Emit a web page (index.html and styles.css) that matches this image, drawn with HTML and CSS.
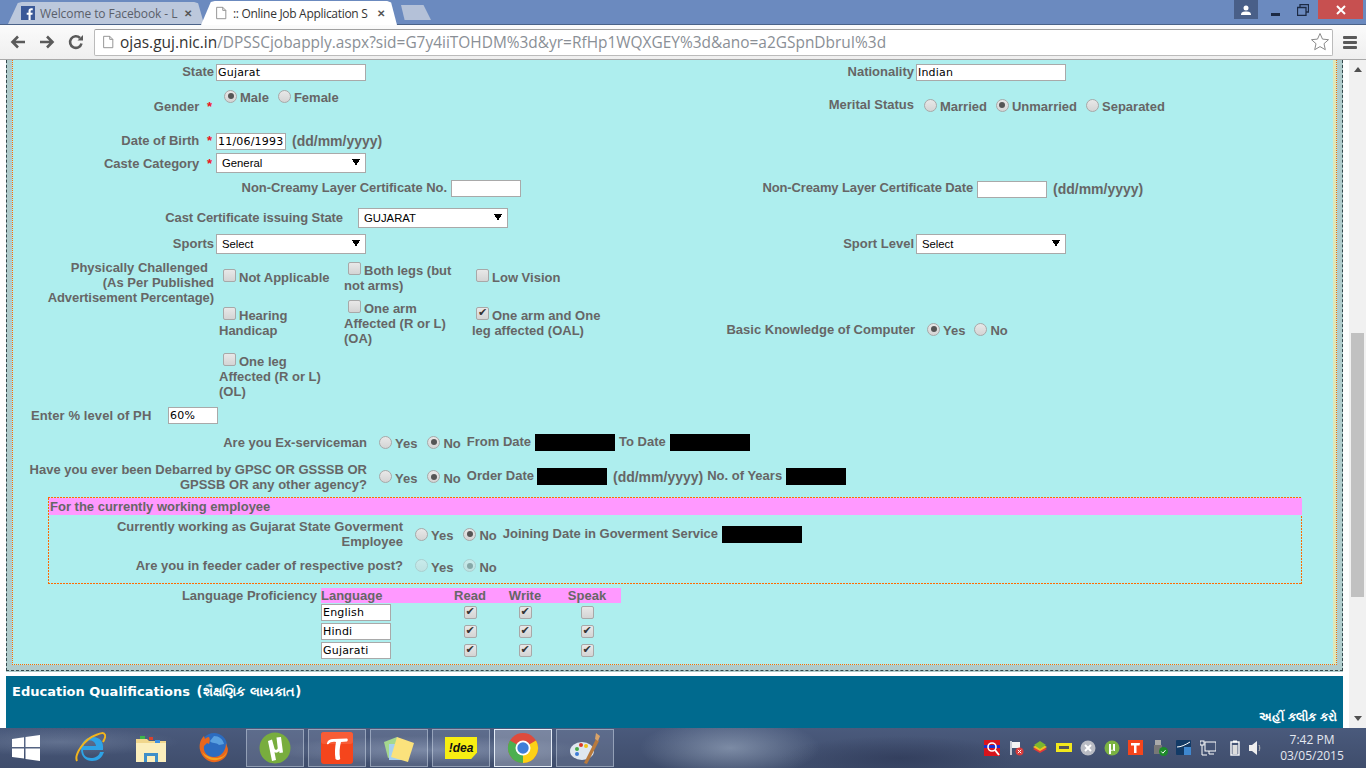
FILE: index.html
```html
<!DOCTYPE html>
<html lang="en">
<head>
<meta charset="utf-8">
<title>:: Online Job Application System</title>
<link rel="stylesheet" href="styles.css">
</head>
<body>
<header class="tabstrip">
  <div class="tab tab-back">
    <svg class="favicon" viewBox="0 0 16 16"><rect width="16" height="16" fill="#3b5998"/><path d="M11 16V10h2l.4-2.400H11V6c0-.8.3-1.200 1.200-1.200h1.200V2.600C13 2.500 12.300 2.500 11.600 2.500 9.800 2.500 8.600 3.600 8.600 5.600v2H6.500V10h2.100v6z" fill="#fff"/></svg>
    <span class="tab-title">Welcome to Facebook - L</span>
    <span class="tab-x">✕</span>
  </div>
  <div class="tab tab-front">
    <svg class="favicon" viewBox="0 0 16 16"><path d="M3 1.500h7l3.500 3.500v9.500H3z M10 1.500V5h3.500" fill="#fff" stroke="#888" stroke-width="1"/></svg>
    <span class="tab-title">:: Online Job Application S</span>
    <span class="tab-x">✕</span>
  </div>
  <div class="tab-new"></div>
  <div class="win-controls">
    <div class="win-user"><svg viewBox="0 0 12 10" width="12" height="10"><circle cx="6" cy="3" r="2.500" fill="#fff"/><path d="M1 10c0-3 2-3.500 5-3.500s5 .5 5 3.500z" fill="#fff"/></svg></div>
    <div class="win-btn"><svg viewBox="0 0 12 12" width="12" height="12"><rect x="2" y="9" width="9" height="3" fill="#1c2a44"/></svg></div>
    <div class="win-btn"><svg viewBox="0 0 12 12" width="12" height="12"><path d="M3 3V.5h8.500V8H9M.5 3.500h8.500V11.500H.5z" fill="none" stroke="#1c2a44" stroke-width="1.300"/></svg></div>
    <div class="win-close"><svg viewBox="0 0 10 10" width="10" height="10"><path d="M1 1l8 8M9 1l-8 8" stroke="#fff" stroke-width="2"/></svg></div>
  </div>
</header>
<nav class="toolbar">
  <svg class="nav-ico" viewBox="0 0 16 16"><path d="M15 8H3M8 2.500L2.500 8 8 13.500" fill="none" stroke="#5a5a5a" stroke-width="2.600"/></svg>
  <svg class="nav-ico" viewBox="0 0 16 16"><path d="M1 8h12M8 2.500L13.500 8 8 13.500" fill="none" stroke="#5a5a5a" stroke-width="2.600"/></svg>
  <svg class="nav-ico" viewBox="0 0 16 16"><path d="M13.500 9.500A5.800 5.800 0 1 1 12 4" fill="none" stroke="#5a5a5a" stroke-width="2.600"/><path d="M9.500 6.500H15V1z" fill="#5a5a5a"/></svg>
  <div class="omnibox">
    <svg class="favicon" viewBox="0 0 16 16"><path d="M3 1.500h7l3.500 3.500v9.500H3z M10 1.500V5h3.500" fill="#fff" stroke="#888" stroke-width="1"/></svg>
    <span class="url"><span class="url-host">ojas.guj.nic.in</span>/DPSSCjobapply.aspx?sid=G7y4iiTOHDM%3d&amp;yr=RfHp1WQXGEY%3d&amp;ano=a2GSpnDbruI%3d</span>
    <svg class="star" viewBox="0 0 20 20"><path d="M10 1.500l2.500 5.600 6 .6-4.500 4 1.300 6L10 14.600 4.700 17.700l1.300-6-4.500-4 6-.6z" fill="#fff" stroke="#8a8a8a" stroke-width="1"/></svg>
  </div>
  <div class="menu-ico"><span></span><span></span><span></span></div>
</nav>
<div class="viewport">
  <main class="page">
    <section class="outer">
      <form class="inner">
        <div class="row r-state">
          <label class="lab lab-a lift">State</label>
          <input class="txt w150" type="text" value="Gujarat">
          <label class="lab lab-b lift">Nationality</label>
          <input class="txt w150" type="text" value="Indian">
        </div>
        <div class="row r-gender">
          <div class="lab lab-a gender-lab">Gender <span class="req">*</span></div>
          <div class="val-a gender-val">
            <input class="rad rad-first" type="radio" checked name="g"><span class="opt">Male</span>
            <input class="rad" type="radio" name="g"><span class="opt">Female</span>
          </div>
          <div class="lab lab-b merital-lab">Merital Status</div>
          <div class="merital-val">
            <input class="rad rad-first" type="radio" name="m"><span class="opt opt-low">Married</span>
            <input class="rad" type="radio" checked name="m"><span class="opt opt-low">Unmarried</span>
            <input class="rad" type="radio" name="m"><span class="opt opt-low">Separated</span>
          </div>
        </div>
        <div class="row r-dob">
          <div class="lab lab-a lift-s">Date of Birth <span class="req">*</span></div>
          <input class="txt w70" type="text" value="11/06/1993">
          <span class="hint">(dd/mm/yyyy)</span>
        </div>
        <div class="row r-caste">
          <div class="lab lab-a">Caste Category <span class="req">*</span></div>
          <select class="sel w150"><option>General</option></select>
        </div>
        <div class="row r-creamy">
          <label class="lab lab-c lift">Non-Creamy Layer Certificate No.</label>
          <input class="txt w70 creamy-no" type="text">
          <label class="lab lab-d lift">Non-Creamy Layer Certificate Date</label>
          <input class="txt w70 creamy-date" type="text">
          <span class="hint">(dd/mm/yyyy)</span>
        </div>
        <div class="row r-cert">
          <label class="lab lab-e lift-s">Cast Certificate issuing State</label>
          <select class="sel w150"><option>GUJARAT</option></select>
        </div>
        <div class="row r-sports">
          <label class="lab lab-a lift-s">Sports</label>
          <select class="sel w150"><option>Select</option></select>
          <label class="lab lab-b lift-s">Sport Level</label>
          <select class="sel w150"><option>Select</option></select>
        </div>
        <div class="row r-ph">
          <div class="lab lab-a ph-lab"><span class="ph-first">Physically Challenged</span><br>(As Per Published<br><span class="ph-tight">Advertisement Percentage)</span></div>
          <div class="ph-grid">
            <div class="ph-cell"><input class="chk" type="checkbox">Not Applicable</div>
            <div class="ph-cell"><input class="chk" type="checkbox">Both legs (but not arms)</div>
            <div class="ph-cell"><input class="chk" type="checkbox">Low Vision</div>
            <div class="ph-cell"><input class="chk" type="checkbox">Hearing Handicap</div>
            <div class="ph-cell"><input class="chk" type="checkbox">One arm Affected (R or L) (OA)</div>
            <div class="ph-cell"><input class="chk" type="checkbox" checked>One arm and One leg affected (OAL)</div>
            <div class="ph-cell"><input class="chk" type="checkbox">One leg Affected (R or L) (OL)</div>
          </div>
          <div class="basic">
            <div class="lab basic-lab">Basic Knowledge of Computer</div>
            <input class="rad rad-first" type="radio" checked name="b"><span class="opt opt-low">Yes</span>
            <input class="rad" type="radio" name="b"><span class="opt opt-low">No</span>
          </div>
        </div>
        <div class="row r-level">
          <label class="lab level-lab">Enter % level of PH</label>
          <input class="txt w50" type="text" value="60%">
        </div>
        <div class="row r-ex">
          <div class="lab lab-f">Are you Ex-serviceman</div>
          <input class="rad rad-first" type="radio" name="x"><span class="opt opt-low">Yes</span>
          <input class="rad rad-no" type="radio" checked name="x"><span class="opt opt-low">No</span>
          <span class="lab date-lab">From Date</span><span class="redact w80"></span>
          <span class="lab date-lab">To Date</span><span class="redact w80"></span>
        </div>
        <div class="row r-deb">
          <div class="lab lab-f">Have you ever been Debarred by GPSC OR GSSSB OR GPSSB OR any other agency?</div>
          <input class="rad rad-first" type="radio" name="d"><span class="opt opt-low">Yes</span>
          <input class="rad rad-no" type="radio" checked name="d"><span class="opt opt-low">No</span>
          <span class="lab date-lab order-lab">Order Date</span><span class="redact w70b"></span>
          <span class="hint deb-hint">(dd/mm/yyyy)</span>
          <span class="lab date-lab">No. of Years</span><span class="redact w60b"></span>
        </div>
        <section class="working">
          <h3 class="working-head">For the currently working employee</h3>
          <div class="row r-cur">
            <div class="lab lab-g lab-wrap">Currently working as Gujarat State Goverment Employee</div>
            <input class="rad rad-first" type="radio" name="c"><span class="opt opt-low">Yes</span>
            <input class="rad rad-no" type="radio" checked name="c"><span class="opt opt-low">No</span>
            <span class="lab date-lab">Joining Date in Goverment Service</span><span class="redact w80"></span>
          </div>
          <div class="row r-feeder">
            <div class="lab lab-g">Are you in feeder cader of respective post?</div>
            <input class="rad rad-first off" type="radio" disabled name="f"><span class="opt opt-low">Yes</span>
            <input class="rad rad-no off" type="radio" checked disabled name="f"><span class="opt opt-low">No</span>
          </div>
        </section>
        <div class="row r-lang">
          <div class="lab lab-h">Language Proficiency</div>
          <div class="lang">
            <div class="lang-head"><span class="lc-name">Language</span><span class="lc lc-r">Read</span><span class="lc lc-w">Write</span><span class="lc lc-s">Speak</span></div>
            <div class="lang-row"><span class="lc-name"><input class="txt w70" type="text" value="English"></span><span class="lc lc-r"><input class="chk tight" type="checkbox" checked></span><span class="lc lc-w"><input class="chk tight" type="checkbox" checked></span><span class="lc lc-s"><input class="chk tight" type="checkbox"></span></div>
            <div class="lang-row"><span class="lc-name"><input class="txt w70" type="text" value="Hindi"></span><span class="lc lc-r"><input class="chk tight" type="checkbox" checked></span><span class="lc lc-w"><input class="chk tight" type="checkbox" checked></span><span class="lc lc-s"><input class="chk tight" type="checkbox" checked></span></div>
            <div class="lang-row"><span class="lc-name"><input class="txt w70" type="text" value="Gujarati"></span><span class="lc lc-r"><input class="chk tight" type="checkbox" checked></span><span class="lc lc-w"><input class="chk tight" type="checkbox" checked></span><span class="lc lc-s"><input class="chk tight" type="checkbox" checked></span></div>
          </div>
        </div>
      </form>
    </section>
    <section class="edu">
      <h2 class="edu-title">Education Qualifications <span class="edu-gu">(શૈક્ષણિક લાયકાત)</span></h2>
      <div class="edu-click">અહીં ક્લીક કરો</div>
    </section>
  </main>
  <aside class="scrollbar">
    <div class="sb-up"></div>
    <div class="sb-track"><div class="sb-thumb"></div></div>
    <div class="sb-down"></div>
  </aside>
</div>
<footer class="taskbar">
  <svg class="start" viewBox="0 0 28 26"><path d="M0 4l12-1.800V12H0zM13.500 2L28 0v12H13.500zM0 13.500h12v10L0 22zM13.500 13.500H28V26l-14.500-2z" fill="#fff"/></svg>
  <div class="pin pin-ie"><svg viewBox="0 0 32 34" width="32" height="34"><path d="M26 21c-1 4-5 6-9 6-5 0-8-3-8-8h20c1-8-3-13-10-13-7 0-12 5-12 12 0 8 5 12 11 12 6 0 10-3 12-9zM9.500 15c.5-3 3-5.500 6.500-5.500 3.500 0 5.800 2.500 6 5.500z" fill="#2ea3e6" fill-rule="evenodd"/><path d="M3 30C0 24 10 8 22 4c5-2 8-3 9 0 1 2-1 5-2 7" fill="none" stroke="#f3b51c" stroke-width="2"/></svg></div>
  <div class="pin pin-ex"><svg viewBox="0 0 32 34" width="32" height="34"><path d="M1 8h11l2 2h17v21H1z" fill="#f0d68c"/><path d="M1 12h30v19H1z" fill="#fbeebc"/><rect x="5" y="5" width="5" height="3" fill="#3bb54a"/><rect x="14" y="6" width="4" height="3" fill="#d8432f"/><rect x="20" y="9" width="5" height="3" fill="#3d8fe0"/><path d="M9 22h14v9h-3v-6h-8v6H9z" fill="#3f8fc9"/></svg></div>
  <div class="pin pin-ff"><svg viewBox="0 0 32 34" width="32" height="34"><circle cx="17" cy="15" r="13" fill="#2c6cc0"/><path d="M17 5c5 0 9 3 10 8l-5 1c-3-3-7-1-9-4z" fill="#5aa0e0"/><path d="M7 5C3 9 2 14 3 19c2 8 9 13 16 12 7-1 12-6 12-13l-2-6c0 8-5 14-12 14C10 26 6 21 7 15l3-3 2 1c1-3 1-5 0-7-2 0-3 1-4 2z" fill="#e8661c"/><path d="M5 21c3 6 9 9 15 8 5-1 9-4 10-9-2 5-6 7-11 7-5 0-10-2-14-6z" fill="#f4a11f"/></svg></div>
  <div class="tb-btn"><svg viewBox="0 0 32 32" width="32" height="32"><circle cx="16" cy="16" r="15.500" fill="#78ad3e"/><path d="M9 9l4-1.500 2.500 9c.6 2 3.300 1.500 3.200-.8L17.500 5.500 22 5l2 15.500-3.500.6-.3-2c-1.300 1.600-2.900 2-4.700 1.200L17 28l-4 1z" fill="#fff"/></svg></div>
  <div class="tb-btn"><svg viewBox="0 0 32 32" width="32" height="32"><rect width="32" height="32" rx="3" fill="#f5451c"/><rect width="32" height="12" rx="3" fill="#f75c36" /><path d="M6 11c1-3 3-4 6-4l14-.5c1 0 1 2.500 0 3l-6 .5c-1.500 5-1.800 11-.8 17-1 1.200-3.500 1.200-4.700 0-1-6-.5-12 .5-17-3-.5-6 0-7.500 2-1 .8-2-.2-1.500-1z" fill="#fff"/></svg></div>
  <div class="tb-btn"><svg viewBox="0 0 32 32" width="32" height="32"><path d="M1 10L14 5l5 16-14 5z" fill="#a5d88e"/><rect x="6" y="12" width="17" height="16" fill="#a6d0ef"/><path d="M14 5l17 6-6 19-17-5z" fill="#fbe27c"/></svg></div>
  <div class="tb-btn"><div class="idea">!dea</div></div>
  <div class="tb-btn tb-active"><svg viewBox="0 0 32 32" width="32" height="32"><circle cx="16" cy="16" r="15" fill="#de4b3c"/><path d="M16 16L29 8.500A15 15 0 0 1 16 31z" fill="#fcd116"/><path d="M16 16L16 31A15 15 0 0 1 3 8.500z" fill="#4caf50"/><circle cx="16" cy="16" r="7.500" fill="#fff"/><circle cx="16" cy="16" r="5.700" fill="#3f7ed8"/></svg></div>
  <div class="tb-btn"><svg viewBox="0 0 32 32" width="32" height="32"><ellipse cx="13" cy="19" rx="12" ry="9" fill="#dfe7ef"/><circle cx="8" cy="17" r="2" fill="#48a94a"/><circle cx="12" cy="13" r="2" fill="#d83a2b"/><circle cx="17" cy="14" r="2" fill="#f0c417"/><circle cx="8" cy="22" r="2" fill="#3d7bd6"/><path d="M15 31l12-24 3 2-12 23z" fill="#b87a3d"/><path d="M26 7l1-6 4 3-2 5z" fill="#d9a369"/></svg></div>
  <div class="tray">
    <svg class="tray-ico" viewBox="0 0 16 16"><rect width="16" height="16" fill="#d8141c"/><rect y="5" width="16" height="3" fill="#1c2fd0"/><circle cx="8" cy="7" r="4" fill="none" stroke="#fff" stroke-width="1.600"/><path d="M11 10l4 5" stroke="#fff" stroke-width="2"/></svg>
    <svg class="tray-ico" viewBox="0 0 16 16"><path d="M3 1v14" stroke="#fff" stroke-width="1.400"/><path d="M4 2h8v6H4z" fill="#f4f4f4"/><circle cx="11.500" cy="11.500" r="4" fill="#d83a3a"/><path d="M9.800 9.800l3.400 3.400M13.200 9.800l-3.400 3.400" stroke="#fff"/></svg>
    <svg class="tray-ico" viewBox="0 0 16 16"><path d="M1 9l7-4 7 4-7 4z" fill="#e23a3a"/><path d="M1 7l7-4 7 4-7 4z" fill="#f0c020"/><path d="M2 5l6-4 6 4-6 4z" fill="#7cb82f"/></svg>
    <svg class="tray-ico" viewBox="0 0 16 16"><rect y="3" width="16" height="9" fill="#f2e81c"/><rect x="3" y="6" width="10" height="3" fill="#555"/></svg>
    <svg class="tray-ico" viewBox="0 0 16 16"><circle cx="8" cy="8" r="7.500" fill="#b9bcc4"/><path d="M5 5l6 6M11 5l-6 6" stroke="#fff" stroke-width="2"/></svg>
    <svg class="tray-ico" viewBox="0 0 16 16"><circle cx="8" cy="8" r="7.500" fill="#7bb342"/><path d="M5 4h2v5c0 1.500 2 1.500 2 0V4h2v7H9.500v-1c-.8.800-1.700 1-2.500.5V14H5z" fill="#fff"/></svg>
    <svg class="tray-ico" viewBox="0 0 16 16"><rect width="15" height="15" fill="#f5451c"/><path d="M3 3h9l-.5 2.500h-3V13h-2.500V5.500H3z" fill="#fff"/></svg>
    <svg class="tray-ico" viewBox="0 0 16 16"><rect x="3" y="0" width="6" height="5" fill="#aaa"/><rect x="2" y="5" width="8" height="9" fill="#777"/><circle cx="11.500" cy="11.500" r="4.500" fill="#1d8a2a"/><path d="M9.300 11.500l1.600 1.700 2.600-3" stroke="#fff" fill="none"/></svg>
    <svg class="tray-ico" viewBox="0 0 16 16"><rect width="15" height="15" rx="1" fill="#123a66"/><rect x="8" y="7" width="7" height="8" fill="#3f88d0"/><path d="M1 7c4 0 8-2 13-5" stroke="#fff" fill="none"/></svg>
    <svg class="tray-ico" viewBox="0 0 16 16"><rect x="5" y="2" width="11" height="9" fill="none" stroke="#fff"/><rect x="0" y="1" width="4" height="4" fill="none" stroke="#fff"/><path d="M2 5v10M9 11v3h5M2 15h5" stroke="#fff" fill="none"/></svg>
    <svg class="tray-ico tray-batt" viewBox="0 0 16 16"><rect x="4" y="2" width="8" height="13" fill="none" stroke="#fff" stroke-width="1.400"/><rect x="6" y="0.500" width="4" height="2" fill="#fff"/><rect x="5.500" y="5" width="5" height="9" fill="#ddd"/></svg>
    <svg class="tray-ico" viewBox="0 0 16 16"><path d="M1 5h3l5-4v14l-5-4H1z" fill="#eee"/><path d="M11 5c1 2 1 4 0 6" stroke="#bbb" fill="none"/></svg>
    <div class="clock"><span>7:42 PM</span><span>03/05/2015</span></div>
  </div>
</footer>
</body>
</html>
```

FILE: styles.css
```css
* { box-sizing: border-box; }
html, body { margin: 0; padding: 0; }
body {
  width: 1366px; height: 768px; overflow: hidden;
  display: flex; flex-direction: column;
  background: #fff;
  font-family: "Liberation Sans", Arial, sans-serif;
}

/* Browser chrome */
.tabstrip {
  height: 25px; flex: none; display: flex; align-items: flex-end;
  background: #6b8abf; border-bottom: 1px solid #4a6288;
  padding-left: 8px; position: relative;
  font-family: "Open Sans", sans-serif; font-size: 12px;
}
.tab {
  width: 196px; height: 22px; display: flex; align-items: center;
  padding: 0 12px 0 13px; gap: 5px; flex: none;
  clip-path: polygon(0 100%, 5% 4%, 7% 0, 95% 0, 97% 6%, 100% 100%);
}
.tab-back { background: #bcc8dc; color: #5a5f6a; letter-spacing: -.08px; }
.tab-front { background: #fff; color: #333; margin-left: -3px; height: 24px; margin-bottom: -1px; letter-spacing: -.3px; }
.favicon { width: 14px; height: 14px; flex: none; }
.tab-title { flex: 1; white-space: nowrap; min-width: 0; }
.tab-x { font-size: 10px; color: #555; font-weight: bold; flex: none; }
.tab-new {
  width: 30px; height: 15px; background: #b4c1d8; margin: 0 0 4px 4px; flex: none;
  clip-path: polygon(0 0, 75% 0, 100% 100%, 12% 100%);
}
.win-controls { margin-left: auto; align-self: flex-start; display: flex; height: 19px; }
.win-user {
  width: 24px; background: #495f88; display: flex; align-items: center; justify-content: center;
  margin-right: 3px;
}
.win-btn { width: 28px; display: flex; align-items: center; justify-content: center; }
.win-close {
  width: 45px; background: #c75050; display: flex; align-items: center; justify-content: center;
  margin: 0 3px 0 1px;
}
.toolbar {
  height: 35px; flex: none; display: flex; align-items: center;
  background: linear-gradient(#fbfbfb, #efefef); border-bottom: 1px solid #a9a9a9;
  padding: 0 0 0 10px;
}
.nav-ico { width: 16px; height: 16px; flex: none; margin-right: 13px; }
.omnibox {
  width: 1239px; height: 27px; margin-left: -3px;
  background: #fff; border: 1px solid #bbb; border-top-color: #a0a0a0; border-radius: 2px;
  display: flex; align-items: center; padding: 0 2px 0 6px; gap: 5px;
}
.url {
  flex: 1; font: 15.440px "Open Sans", sans-serif; color: #8a8f96; white-space: nowrap; overflow: hidden;
}
.url-host { color: #333; }
.star { width: 20px; height: 20px; flex: none; }
.menu-ico { width: 14px; margin-left: 10px; display: flex; flex-direction: column; gap: 2px; }
.menu-ico span { display: block; height: 3px; background: #5a5a5a; border-radius: 1px; }

/* Page */
.viewport { flex: 1; display: flex; min-height: 0; }
.page { width: 1349px; flex: none; overflow: hidden; }
.scrollbar { width: 17px; flex: none; background: #f1f1f1; display: flex; flex-direction: column; align-items: center; }
.sb-up, .sb-down { width: 0; height: 0; flex: none; border: 4px solid transparent; }
.sb-up { border-top: 0; border-bottom: 5px solid #505050; margin: 7px 0 5px; }
.sb-down { border-bottom: 0; border-top: 5px solid #505050; margin: 5px 0 7px; }
.sb-track { flex: 1; width: 100%; padding-top: 256px; padding-left: 2px; padding-right: 2px; }
.sb-thumb { height: 264px; background: #c1c1c1; }

.outer {
  margin-left: 6px; width: 1337px; height: 611px;
  background: #b0cccc;
  border-left: 1px dashed #33484c; border-right: 1px dashed #33484c; border-bottom: 1px dashed #33484c;
  padding: 0 5px 5px;
  box-shadow: 0 1px 0 #b0cccc;
}
.inner {
  height: 605px; display: block;
  background: #aeeeee;
  border: 1px dotted #ff6a00; border-top: 0;
  box-shadow: inset -3px 0 0 #dfe8b8;
  color: #666; font-size: 13px; font-weight: bold; line-height: 15px;
}
.row { display: flex; align-items: center; }
.lab { text-align: right; flex: none; }
.lift { margin-bottom: 3px; }
.lift-s { margin-bottom: 2px; }
.lab-a { width: 201px; margin-right: 2px; }
.lab-b { width: 198px; margin-right: 2px; margin-left: 0; }
.lab-c { width: 434px; margin-right: 4px; letter-spacing: -.06px; }
.lab-d { width: 452px; margin-right: 4px; letter-spacing: -.12px; }
.lab-e { width: 330px; margin-right: 15px; letter-spacing: -.07px; }
.lab-f { width: 354px; }
.lab-g { width: 354px; }
.lab-wrap { padding-left: 60px; }
.lab-h { width: 304px; margin-right: 4px; }
.req { color: #f01020; margin-left: 4px; margin-right: 2px; }

.txt {
  height: 17px; border: 1px solid #a9a9a9; background: #fff; padding: 0 0 0 1px; margin: 0;
  font: 11px "DejaVu Sans", sans-serif; letter-spacing: .2px; color: #000; flex: none; outline: 0; border-radius: 0;
}
.sel {
  height: 20px; border: 1px solid #a9a9a9; background-color: #fff; margin: 0; padding: 0 0 0 5px;
  font: 11.300px "Liberation Sans", Arial, sans-serif; color: #000; flex: none; appearance: none; border-radius: 0;
  background-image:
    linear-gradient(to top right, transparent 50%, #000 50%),
    linear-gradient(to top left, transparent 50%, #000 50%);
  background-size: 4px 7px, 4px 7px;
  background-position: right 9px top 5px, right 5px top 5px;
  background-repeat: no-repeat;
}
.w150 { width: 150px; }
.w70 { width: 70px; }
.w50 { width: 50px; }
.hint { flex: none; margin-left: 6px; font-size: 14px; font-weight: bold; }

.rad, .chk {
  appearance: none; width: 13px; height: 13px; margin: 0; flex: none;
  border: 1px solid #a8a8a8; position: relative;
  background: linear-gradient(#e8e8e8, #d4d4d4);
}
.rad { border-radius: 50%; margin: 0 3px 0 8px; }
.rad-first { margin-left: 0; }
.rad:checked::after {
  content: ""; position: absolute; left: 2.500px; top: 2.500px; width: 6px; height: 6px;
  border-radius: 50%; background: #555;
}
.off { opacity: .45; }
.opt { flex: none; margin-top: 2px; margin-right: 1px; }
.chk { border-radius: 2px; display: inline-block; vertical-align: 0; margin: 0 3px 0 4px; }
.chk:checked::after {
  content: "✔"; position: absolute; left: 1px; top: -2px; font: 11px/13px "DejaVu Sans", sans-serif; color: #333;
}
.chk.tight { margin: 0; }

.r-state { height: 25px; }
.r-state .txt + .lab { margin-left: 350px; }
.r-gender { height: 45px; align-items: flex-start; }
.gender-lab { margin-top: 14px; }
.val-a { width: 499px; flex: none; display: flex; align-items: center; margin-top: 2px; padding-left: 8px; }
.gender-val .opt { margin-top: 3px; }
.merital-lab { margin-top: 12px; width: 199px; }
.merital-val { display: flex; align-items: center; margin-top: 11px; padding-left: 8px; }
.opt-low { margin-top: 3px; }
.r-dob { height: 22px; }
.r-caste { height: 22px; }
.r-creamy { height: 30px; }
.creamy-no { margin-bottom: 2px; }
.creamy-date { margin: 0; }
.r-cert { height: 28px; }
.r-sports { height: 24px; }
.r-sports .sel + .lab { margin-left: 350px; }
.r-ph { height: 146px; align-items: flex-start; font-weight: bold; }
.ph-lab { margin-top: 4px; }
.ph-first { margin-right: 6px; }
.ph-tight { letter-spacing: -.08px; }
.ph-grid {
  width: 400px; margin-left: 3px; flex: none; display: grid;
  grid-template-columns: 125px 128px 135px; grid-template-rows: 36px 55px 52px; margin-top: 3px;
}
.ph-cell { align-self: center; padding-right: 4px; }
.basic { display: flex; align-items: center; margin-top: 64px; }
.basic-lab { width: 296px; margin-right: 12px; margin-left: 0; }
.r-level { height: 26px; }
.level-lab { margin-left: 18px; width: 120px; text-align: left; margin-right: 17px; letter-spacing: .1px; white-space: nowrap; }
.r-ex { height: 28px; }
.r-deb { height: 41px; }
.lab-f { margin-right: 12px; }
.lab-g { margin-right: 12px; }
.rad-no { margin-left: 9px; }
.date-lab { margin-left: 5px; margin-right: 4px; margin-bottom: 2px; }
.redact + .date-lab { margin-left: 4px; }
.order-lab { margin-right: 3px; }
.deb-hint { margin-top: 2px; margin-right: 0; }
.deb-hint + .date-lab { margin-left: 4px; margin-right: 4px; }
.r-cur .date-lab { margin-right: 4px; }
.redact { height: 17px; background: #000; flex: none; }
.w80 { width: 80px; }
.w70b { width: 70px; }
.w60b { width: 60px; }

.working {
  margin-left: 35px; width: 1254px; height: 87px; padding: 1px;
  --dot: repeating-linear-gradient(90deg, #ff6a00 0 2px, transparent 2px 3px);
  --dotv: repeating-linear-gradient(0deg, #ff6a00 0 2px, transparent 2px 3px);
  background-image: var(--dot), var(--dot), var(--dotv), var(--dotv);
  background-size: 100% 1px, 100% 1px, 1px 100%, 1px 100%;
  background-position: 0 0, 0 100%, 0 0, 100% 0;
  background-repeat: no-repeat;
}
.working-head {
  margin: 0 -1px 0 0; height: 17px; background: #ff99ff; font: inherit; padding-left: 1px; line-height: 17px;
}
.r-cur { height: 38px; }
.r-feeder { height: 25px; }

.r-lang { align-items: flex-start; margin-top: 4px; }
.lang { width: 300px; flex: none; }
.lang-head { height: 15px; background: #ff99ff; display: flex; align-items: center; }
.lang-row { height: 19px; display: flex; align-items: center; }
.lc-name { width: 70px; flex: none; display: flex; }
.lc { flex: none; display: flex; justify-content: center; }
.lc-r { width: 60px; margin-left: 49px; }
.lc-w { width: 50px; }
.lc-s { width: 68px; margin-left: 3px; }

.edu {
  margin: 5px 0 0 6px; width: 1337px; height: 52px;
  background: #006a8e; color: #fff; position: relative;
  font-family: "DejaVu Sans", "Noto Sans", sans-serif; font-weight: bold;
}
.edu-title { margin: 0; padding: 8px 0 0 6px; font-size: 13px; line-height: 16px; font-weight: bold; }
.edu-gu { font-size: 13.200px; letter-spacing: .1px; margin-left: 2px; }
.edu-click { position: absolute; right: 6px; bottom: 3px; font-size: 12px; line-height: 16px; }

/* Taskbar */
.taskbar {
  height: 40px; flex: none; display: flex; align-items: center;
  padding-left: 12px;
  background:
    radial-gradient(ellipse 90px 30px at 730px 20px, rgba(170,185,205,.55), transparent),
    radial-gradient(ellipse 120px 22px at 900px 30px, rgba(40,50,80,.55), transparent),
    radial-gradient(ellipse 160px 14px at 430px 22px, rgba(170,185,210,.4), transparent),
    radial-gradient(ellipse 120px 14px at 60px 14px, rgba(150,165,190,.35), transparent),
    linear-gradient(#4a5a7c, #3f4d6c);
}
.start { width: 28px; height: 26px; flex: none; margin-right: 34px; }
.pin { width: 62px; flex: none; display: flex; justify-content: center; }
.pin-ie { width: 32px; margin-right: 29px; }
.pin-ex { width: 32px; margin-right: 30px; }
.pin-ff { width: 32px; margin-right: 17px; }
.tb-btn {
  width: 58px; height: 38px; flex: none; margin-right: 4px;
  display: flex; align-items: center; justify-content: center;
  border: 1px solid rgba(220,230,245,.45);
  background: rgba(220,230,245,.14);
}
.tb-active { background: rgba(235,240,250,.3); border-color: #e4ecf6; }
.idea {
  width: 32px; height: 22px; background: #f7ee12; color: #111; font: italic bold 12px/22px "Liberation Sans", sans-serif;
  text-align: center; clip-path: polygon(0 0, 100% 0, 100% 70%, 82% 100%, 0 100%);
}
.tray { margin-left: auto; display: flex; align-items: center; height: 100%; }
.tray-ico { width: 16px; height: 16px; flex: none; margin-right: 8px; }
.tray-batt { margin-left: 3px; margin-right: 5px; }
.clock {
  width: 80px; margin: 0 14px 0 0; display: flex; flex-direction: column; align-items: center;
  font: 12px/16px "Open Sans", sans-serif; color: #e4e8f0;
}
```
